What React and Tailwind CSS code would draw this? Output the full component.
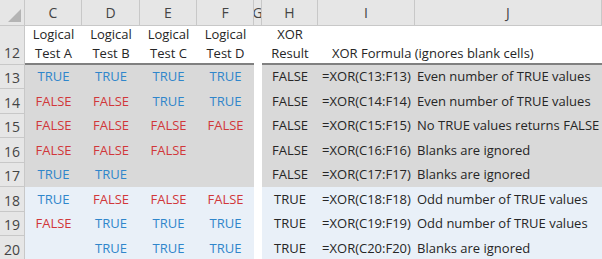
const COLS = ["C", "D", "E", "F", "G", "H", "I", "J"];

const ROWS = [
  { n: 13, v: ["TRUE", "TRUE", "TRUE", "TRUE"], r: "FALSE", note: "Even number of TRUE values" },
  { n: 14, v: ["FALSE", "FALSE", "TRUE", "TRUE"], r: "FALSE", note: "Even number of TRUE values" },
  { n: 15, v: ["FALSE", "FALSE", "FALSE", "FALSE"], r: "FALSE", note: "No TRUE values returns FALSE" },
  { n: 16, v: ["FALSE", "FALSE", "FALSE", ""], r: "FALSE", note: "Blanks are ignored" },
  { n: 17, v: ["TRUE", "TRUE", "", ""], r: "FALSE", note: "Blanks are ignored" },
  { n: 18, v: ["TRUE", "FALSE", "FALSE", "FALSE"], r: "TRUE", note: "Odd number of TRUE values" },
  { n: 19, v: ["FALSE", "TRUE", "TRUE", "TRUE"], r: "TRUE", note: "Odd number of TRUE values" },
  { n: 20, v: ["", "TRUE", "TRUE", "TRUE"], r: "TRUE", note: "Blanks are ignored" },
];

const HDR = "border-r border-b border-[#c8c8c8] bg-[#e6e6e6] text-[#444]";

export default function App() {
  return (
    <div className="h-[259px] w-[602px] overflow-hidden bg-white font-['Open_Sans',sans-serif] text-[13px] text-[#262626]">
      <div className="grid grid-cols-[25px_57px_58px_57px_57px_8px_56px_97px_187px]">
        {/* column letters */}
        <div className={`${HDR} relative h-[26px]`}>
          <div className="absolute bottom-[3px] right-[3px] h-0 w-0 border-b-[13px] border-l-[13px] border-b-[#b4b4b4] border-l-transparent" />
        </div>
        {COLS.map((c) => (
          <div key={c} className={`${HDR} flex h-[26px] items-center justify-center overflow-hidden text-[14px]`}>
            {c}
          </div>
        ))}

        {/* row 12 */}
        <div className={`${HDR} flex h-[39px] items-end justify-center pb-[2px] leading-[19px] text-[14px]`}>12</div>
        {["A", "B", "C", "D"].map((l) => (
          <div key={l} className="flex h-[39px] flex-col items-center justify-end border-b-2 border-[#808080] leading-[19px]">
            <span>Logical</span>
            <span>Test {l}</span>
          </div>
        ))}
        <div className="h-[39px]" />
        <div className="flex h-[39px] flex-col items-center justify-end border-b-2 border-[#808080] leading-[19px]">
          <span>XOR</span>
          <span>Result</span>
        </div>
        <div className="relative z-10 flex h-[39px] items-end overflow-visible whitespace-nowrap border-b-2 border-[#808080] pl-[14px] leading-[19px]">
          XOR Formula (ignores blank cells)
        </div>
        <div className="h-[39px] border-b-2 border-[#808080]" />

        {/* data rows */}
        {ROWS.map((row, i) => {
          const bg = row.n < 18 ? "bg-[#d9d9d9]" : "bg-[#e9f0f8]";
          const h = i % 2 === 0 ? "h-[24px]" : "h-[25px]";
          return [
            <div key={`n${row.n}`} className={`${HDR} ${h} flex items-center justify-center pt-[2px] text-[14px]`}>
              {row.n}
            </div>,
            ...row.v.map((v, j) => (
              <div
                key={`v${row.n}${j}`}
                className={`${bg} ${h} flex items-center justify-center ${
                  v === "TRUE" ? "text-[#2f86cb]" : "text-[#d1373a]"
                }`}
              >
                {v}
              </div>
            )),
            <div key={`g${row.n}`} className={h} />,
            <div key={`r${row.n}`} className={`${bg} ${h} flex items-center justify-center`}>
              {row.r}
            </div>,
            <div key={`f${row.n}`} className={`${bg} ${h} flex items-center justify-center whitespace-nowrap`}>
              =XOR(C{row.n}:F{row.n})
            </div>,
            <div key={`t${row.n}`} className={`${bg} ${h} flex items-center whitespace-nowrap pl-[2px]`}>
              {row.note}
            </div>,
          ];
        })}
      </div>
    </div>
  );
}
